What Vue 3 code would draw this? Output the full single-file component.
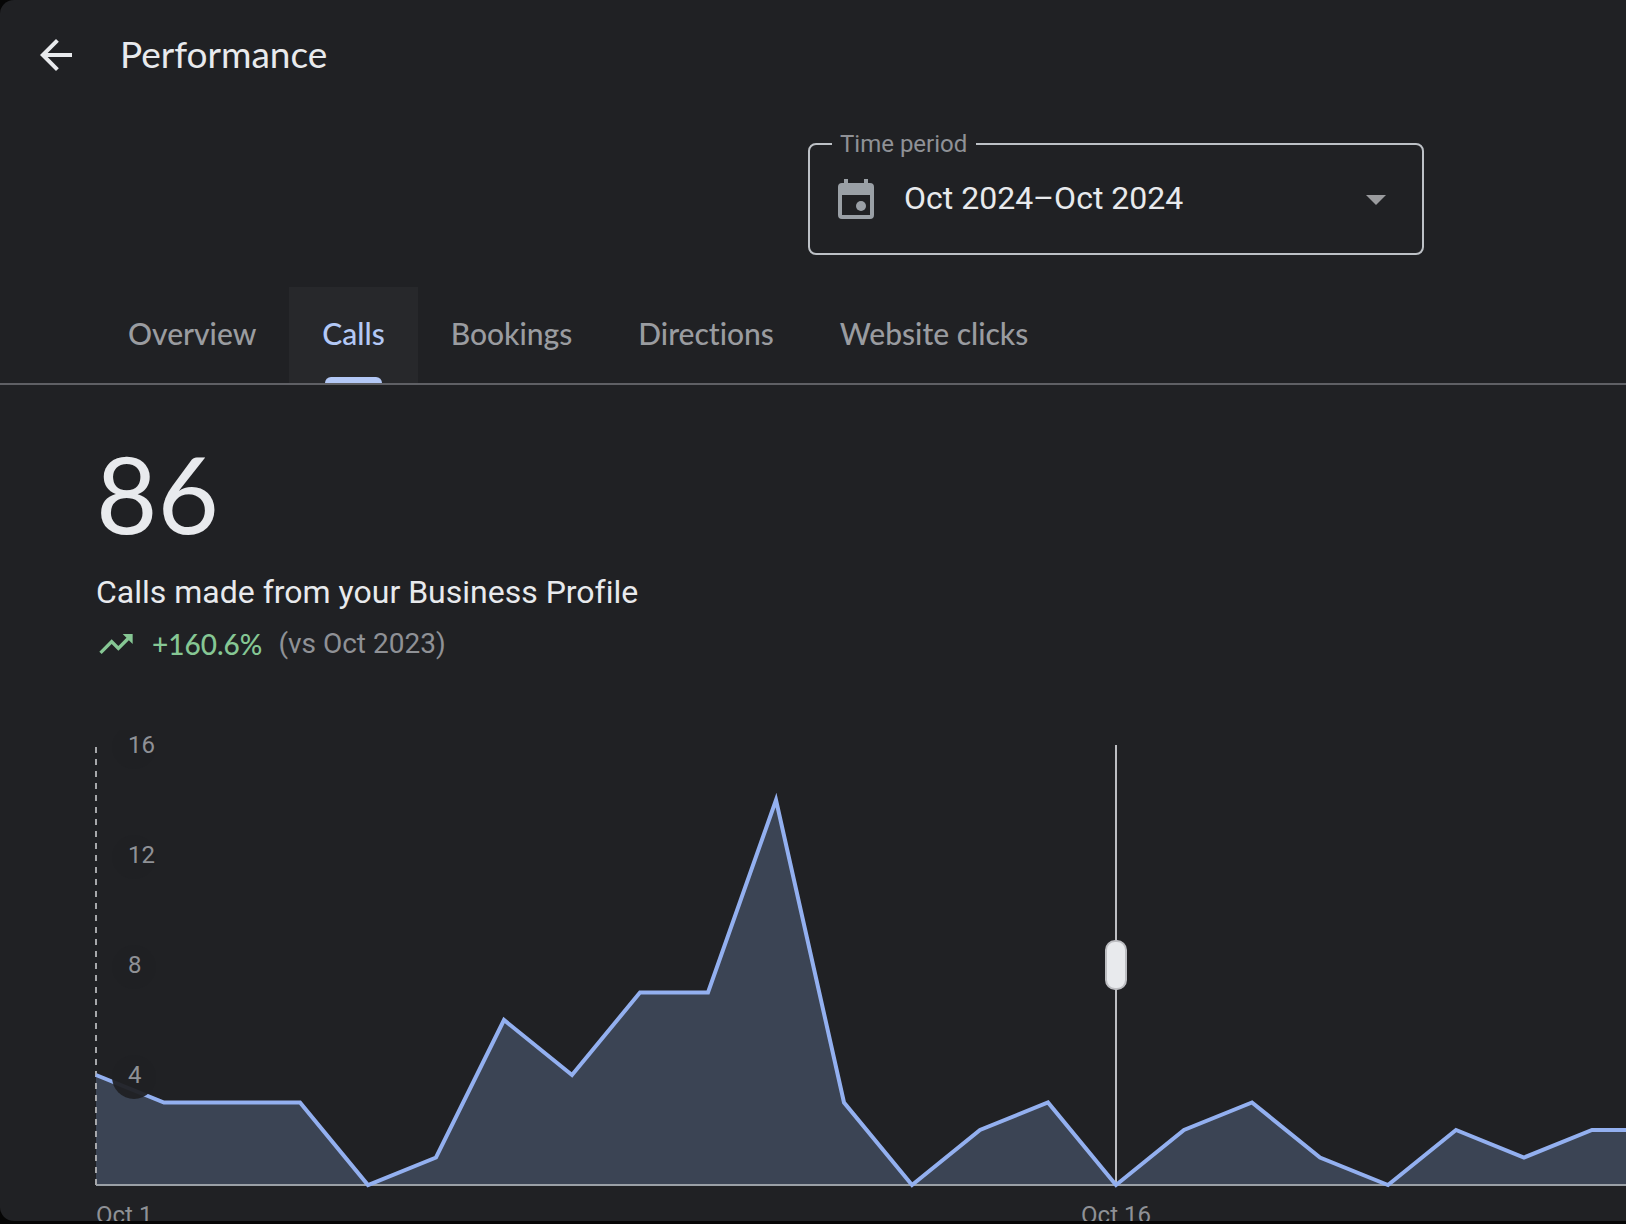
<script setup>
import { computed, ref } from 'vue'

const tabs = ['Overview', 'Calls', 'Bookings', 'Directions', 'Website clicks']
const activeTab = ref('Calls')
const period = ref('Oct 2024–Oct 2024')

// Calls per day, starting on Oct 1
const calls = [4, 3, 3, 3, 0, 1, 6, 4, 7, 7, 14, 3, 0, 2, 3, 0, 2, 3, 1, 0, 2, 1, 2, 2, 3, 1, 0, 2, 4, 2, 1]
const ticks = [16, 12, 8, 4]

const chart = { left: 1, top: 15, bottom: 455, step: 68, max: 16 }
const xAt = (day) => chart.left + day * chart.step
const yAt = (value) => chart.bottom - (value * (chart.bottom - chart.top)) / chart.max

const linePoints = calls.map((value, day) => `${xAt(day)},${yAt(value)}`).join(' ')
const lastX = xAt(calls.length - 1)
const areaPoints = `${xAt(0)},${chart.bottom} ${linePoints} ${lastX},${chart.bottom}`

const selectedDay = ref(15)
const markerX = computed(() => xAt(Number(selectedDay.value)))
</script>

<template>
  <div class="screen">
    <main class="panel">
      <header class="header">
        <button class="back" type="button" aria-label="Back">
          <svg viewBox="0 0 24 24" width="48" height="48" aria-hidden="true">
            <path d="M20 11H7.83l5.59-5.59L12 4l-8 8 8 8 1.41-1.41L7.83 13H20v-2z" />
          </svg>
        </button>
        <h1 class="title">Performance</h1>
      </header>

      <fieldset class="period">
        <legend><label for="period">Time period</label></legend>
        <svg class="calendar" viewBox="0 0 24 24" width="48" height="48" aria-hidden="true">
          <path
            fill-rule="evenodd"
            d="M6 2h2v2h8V2h2v2h1a2 2 0 0 1 2 2v14a2 2 0 0 1-2 2H5a2 2 0 0 1-2-2V6a2 2 0 0 1 2-2h1zM5 10v10h14V10z"
          />
          <circle cx="14.5" cy="15.5" r="2.5" />
        </svg>
        <select id="period" v-model="period">
          <option>Oct 2024–Oct 2024</option>
        </select>
        <svg class="caret" viewBox="0 0 24 24" width="48" height="48" aria-hidden="true">
          <path d="M7 10l5 5 5-5z" />
        </svg>
      </fieldset>

      <nav class="tabs" role="tablist">
        <button
          v-for="tab in tabs"
          :key="tab"
          type="button"
          role="tab"
          class="tab"
          :class="{ active: tab === activeTab }"
          :aria-selected="tab === activeTab"
          @click="activeTab = tab"
        >
          {{ tab }}
        </button>
      </nav>

      <section class="content">
        <p class="total">86</p>
        <h2 class="caption">Calls made from your Business Profile</h2>
        <p class="trend">
          <svg viewBox="0 0 24 24" width="40" height="40" aria-hidden="true">
            <path d="M16 6l2.29 2.29-4.88 4.88-4-4L2 16.59 3.41 18l6-6 4 4 6.3-6.29L22 12V6z" />
          </svg>
          <span class="change">+160.6%</span>
          <span class="versus">(vs Oct 2023)</span>
        </p>

        <div class="chart">
          <svg class="plot" width="100%" height="520">
            <polygon class="area" :points="areaPoints" />
            <line class="axis" :x1="chart.left" :x2="lastX" :y1="chart.bottom" :y2="chart.bottom" />
            <line class="dashes" :x1="chart.left" :x2="chart.left" :y1="chart.top + 2" :y2="chart.bottom" />
            <line class="marker" :x1="markerX" :x2="markerX" :y1="chart.top" :y2="chart.bottom" />
            <polyline class="line" :points="linePoints" />
            <g v-for="tick in ticks" :key="tick">
              <circle class="halo" cx="39" :cy="yAt(tick) + 2" r="22" />
              <text class="label" x="33" :y="yAt(tick) + 8">{{ tick }}</text>
            </g>
            <text class="label" x="1" y="493">Oct 1</text>
            <text class="label middle" :x="markerX" y="493">Oct {{ Number(selectedDay) + 1 }}</text>
          </svg>
          <input
            v-model="selectedDay"
            class="slider"
            type="range"
            min="0"
            :max="calls.length - 1"
            aria-label="Selected day"
          />
        </div>
      </section>
    </main>
  </div>
</template>

<style>
body {
  margin: 0;
  background: #000;
}
</style>

<style scoped>
.screen {
  box-sizing: border-box;
  height: 100vh;
  padding-bottom: 3px;
  background: #060606;
  font-family: Roboto, "Liberation Sans", sans-serif;
  font-variant-ligatures: none;
  color: #e8eaed;
}

.panel {
  height: 100%;
  overflow: hidden;
  border-radius: 14px 0 0 14px;
  background: #202124;
}

h1,
h2,
p {
  margin: 0;
  font-weight: 400;
}

button {
  border: 0;
  background: none;
  cursor: pointer;
}

.header {
  display: flex;
  align-items: center;
  gap: 40px;
  height: 110px;
  padding: 0 32px;
}

.back {
  display: flex;
  padding: 0;
}

.back svg {
  fill: #e8eaed;
}

.title {
  padding-bottom: 2px;
  font-family: Lato, sans-serif;
  font-size: 37px;
  line-height: 48px;
}

.period {
  position: relative;
  box-sizing: border-box;
  display: flex;
  align-items: center;
  width: 616px;
  height: 125px;
  margin: 20px 202px 0 auto;
  padding: 0 22px 14px;
  border: 2px solid #bdc1c6;
  border-radius: 8px;
}

.period legend {
  padding: 0 9px 0 8px;
  font-size: 24px;
  line-height: 28px;
  color: #8f9196;
}

.calendar {
  flex: none;
  fill: #9aa0a6;
}

.period select {
  flex: 1;
  margin-left: 24px;
  border: 0;
  padding: 0 0 2px;
  appearance: none;
  background: none;
  font: 32px/40px Roboto, sans-serif;
  color: #e8eaed;
}

.caret {
  flex: none;
  fill: #9a9b9e;
  pointer-events: none;
}

.tabs {
  display: flex;
  height: 96px;
  margin-top: 32px;
  padding-left: 95px;
  border-bottom: 2px solid #5f6065;
}

.tab {
  position: relative;
  padding: 0 33px 4px;
  font: 500 30px/36px Lato, sans-serif;
  font-variant-ligatures: none;
  color: #9a9ca0;
}

.tab.active {
  background: #27282b;
  color: #b3c8f6;
}

.tab.active::after {
  content: "";
  position: absolute;
  right: 36px;
  bottom: 0;
  left: 36px;
  height: 6px;
  border-radius: 6px 6px 0 0;
  background: #b3c8f6;
}

.content {
  padding: 44px 0 0 96px;
}

.total {
  font-family: Lato, sans-serif;
  font-size: 106px;
  line-height: 128px;
}

.caption {
  margin-top: 15px;
  font-size: 32px;
  line-height: 40px;
}

.trend {
  display: flex;
  align-items: center;
  margin-top: 12px;
  font-size: 28px;
  line-height: 40px;
}

.trend svg {
  fill: #86c794;
}

.change {
  margin-left: 16px;
  font-family: Lato, sans-serif;
  font-weight: 500;
  color: #86c794;
}

.versus {
  margin-left: 16px;
  color: #8f9196;
}

.chart {
  position: relative;
  margin: 66px 0 0 -1px;
}

.plot {
  display: block;
}

.area {
  fill: #3b4454;
}

.axis {
  stroke: #9aa0a6;
  stroke-width: 2;
}

.dashes {
  stroke: #a6a7aa;
  stroke-width: 2;
  stroke-dasharray: 6 6;
}

.marker {
  stroke: #bdbec2;
  stroke-width: 2;
}

.line {
  fill: none;
  stroke: #93b0f0;
  stroke-width: 4;
}

.halo {
  fill: #202124;
  fill-opacity: 0.95;
}

.label {
  fill: #8f9196;
  font-size: 24px;
}

.middle {
  text-anchor: middle;
}

.slider {
  position: absolute;
  top: 210px;
  left: -10px;
  width: 2062px;
  height: 50px;
  margin: 0;
  appearance: none;
  background: none;
}

.slider::-webkit-slider-thumb {
  box-sizing: border-box;
  width: 22px;
  height: 50px;
  appearance: none;
  border: 2px solid #bdbec2;
  border-radius: 10px;
  background: #e8eaed;
}
</style>
